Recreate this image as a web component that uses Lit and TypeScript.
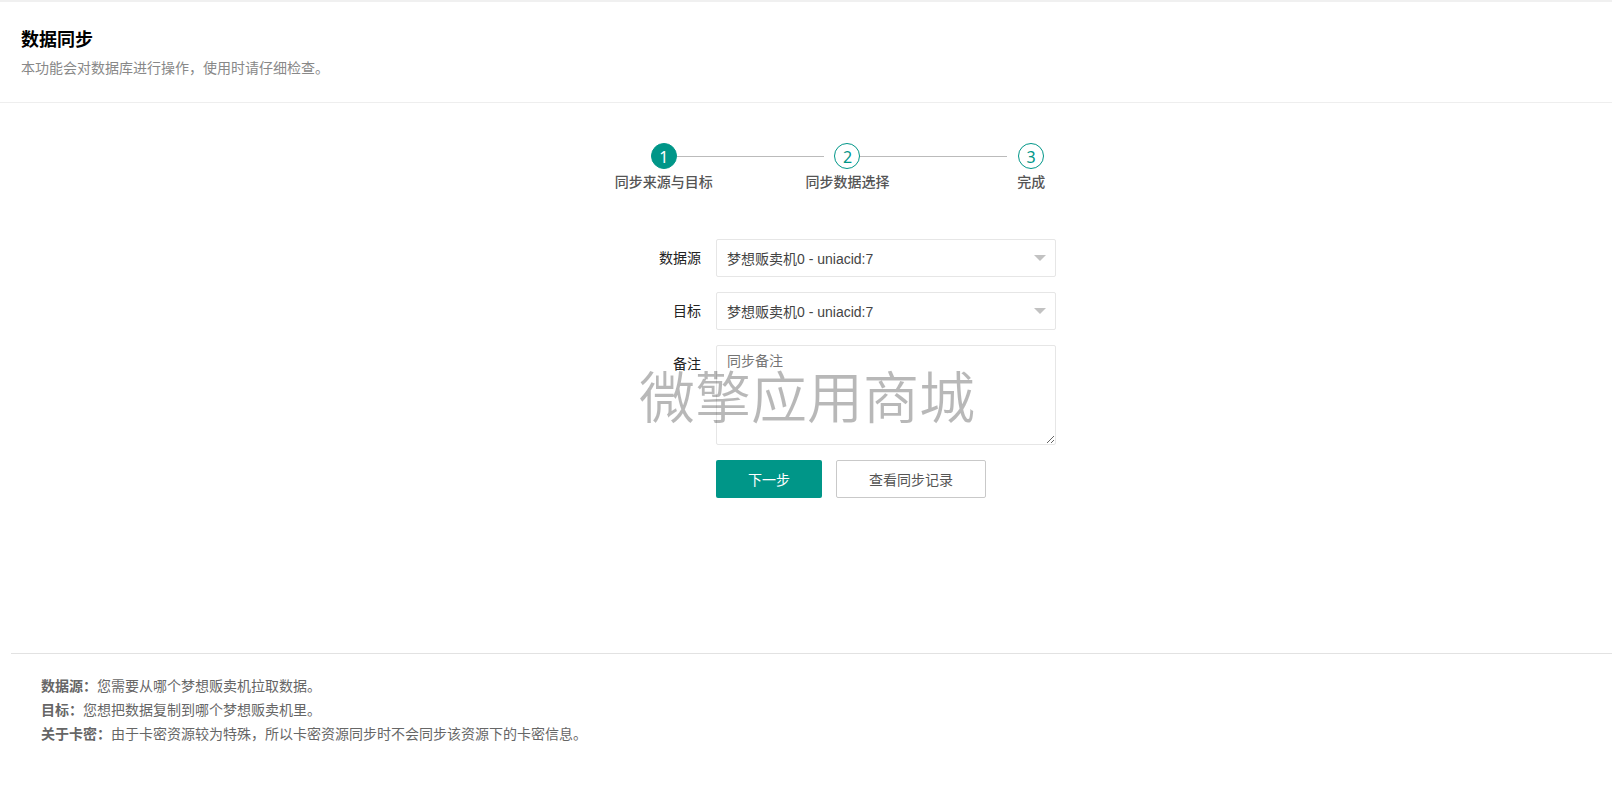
import { LitElement, html, css } from "lit";
import { customElement, state } from "lit/decorators.js";
import { classMap } from "lit/directives/class-map.js";

const STEPS = ["同步来源与目标", "同步数据选择", "完成"];
const MACHINES = [{ id: 7, name: "梦想贩卖机0 - uniacid:7" }];
const NOTES = [
  { term: "数据源：", text: "您需要从哪个梦想贩卖机拉取数据。" },
  { term: "目标：", text: "您想把数据复制到哪个梦想贩卖机里。" },
  {
    term: "关于卡密：",
    text: "由于卡密资源较为特殊，所以卡密资源同步时不会同步该资源下的卡密信息。",
  },
];

@customElement("app-root")
export class AppRoot extends LitElement {
  @state() current = 0;

  static styles = css`
    :host {
      display: block;
      color: #333;
      font: 14px/24px "Noto Sans CJK SC", sans-serif;
    }
    * {
      box-sizing: border-box;
    }
    .header {
      padding: 22px 21px 23px;
      border-top: 2px solid #f0f0f0;
      border-bottom: 1px solid #eee;
    }
    .title {
      margin: 0 0 3px;
      color: #000;
      font-size: 18px;
      font-weight: 700;
      line-height: 28px;
    }
    .subtitle {
      margin: 0;
      color: #888;
    }
    .main {
      position: relative;
      width: 500px;
      max-width: 100%;
      min-height: 550px;
      margin: 0 auto;
      padding-top: 40px;
    }
    .steps {
      display: grid;
      grid-template-columns: repeat(3, 1fr);
      margin: 0 -67px 0 16px;
      padding: 0;
      list-style: none;
    }
    .step {
      display: grid;
      grid-template-columns: 1fr 26px 1fr;
      align-items: center;
      text-align: center;
    }
    .number {
      grid-column: 2;
      height: 26px;
      border: 1px solid #009688;
      border-radius: 50%;
      color: #009688;
      font-family: "Noto Sans", sans-serif;
      font-size: 16px;
      line-height: 26px;
    }
    .active .number {
      background: #009688;
      color: #fff;
    }
    .line {
      grid-row: 1;
      grid-column: 3;
      height: 1px;
      margin-right: -68px;
      background: #bbb;
    }
    .step-name {
      grid-column: 1 / -1;
      color: #555;
      font-weight: 500;
    }
    .form {
      display: grid;
      grid-template-columns: 1fr 340px;
      gap: 15px;
      margin-top: 46px;
    }
    .label {
      padding-top: 6px;
      color: #222;
      text-align: right;
    }
    .select-box {
      position: relative;
    }
    .field {
      display: block;
      width: 100%;
      height: 38px;
      margin: 0;
      padding: 2px 10px 0;
      border: 1px solid #e6e6e6;
      border-radius: 2px;
      outline: none;
      background: #fff;
      color: #444;
      font: 14px/20px "Liberation Sans", "Noto Sans CJK SC", sans-serif;
      appearance: none;
    }
    .area {
      height: 100px;
      padding: 5px 10px;
      resize: vertical;
    }
    .area::placeholder {
      color: #757575;
    }
    .arrow {
      position: absolute;
      top: 16px;
      right: 10px;
      width: 12px;
      height: 6px;
      fill: #c2c2c2;
      pointer-events: none;
    }
    .actions {
      grid-column: 2;
      display: flex;
      gap: 14px;
    }
    .button {
      height: 38px;
      padding: 0 32px;
      border: 1px solid #c9c9c9;
      border-radius: 2px;
      background: #fff;
      color: #555;
      font: inherit;
      cursor: pointer;
    }
    .primary {
      border: none;
      background: #009688;
      color: #fff;
    }
    .watermark {
      position: absolute;
      top: 251px;
      left: 83px;
      color: rgba(0, 0, 0, 0.28);
      font-size: 56px;
      font-weight: 350;
      line-height: 80px;
      white-space: nowrap;
      pointer-events: none;
    }
    .notes {
      margin: 0 0 0 11px;
      padding: 19px 30px;
      border-top: 1px solid #e2e2e2;
      color: #666;
    }
    .note {
      margin: 0;
    }
  `;

  private next() {
    this.current = Math.min(this.current + 1, STEPS.length - 1);
  }

  private renderSelect(id: string, label: string) {
    return html`
      <label class="label" for=${id}>${label}</label>
      <div class="select-box">
        <select class="field" id=${id}>
          ${MACHINES.map((m) => html`<option value=${m.id}>${m.name}</option>`)}
        </select>
        <svg class="arrow" viewBox="0 0 12 6" aria-hidden="true">
          <path d="M0 0h12L6 6z" />
        </svg>
      </div>
    `;
  }

  render() {
    return html`
      <header class="header">
        <h1 class="title">数据同步</h1>
        <p class="subtitle">本功能会对数据库进行操作，使用时请仔细检查。</p>
      </header>
      <main class="main">
        <ol class="steps">
          ${STEPS.map(
            (name, i) => html`
              <li class="step ${classMap({ active: i === this.current })}">
                <span class="number">${i + 1}</span>
                ${i < STEPS.length - 1 ? html`<span class="line"></span>` : ""}
                <span class="step-name">${name}</span>
              </li>
            `
          )}
        </ol>
        <form class="form" @submit=${(e: Event) => e.preventDefault()}>
          ${this.renderSelect("source", "数据源")}
          ${this.renderSelect("target", "目标")}
          <label class="label" for="remark">备注</label>
          <textarea class="field area" id="remark" placeholder="同步备注"></textarea>
          <div class="actions">
            <button class="button primary" type="button" @click=${this.next}>下一步</button>
            <button class="button" type="button">查看同步记录</button>
          </div>
        </form>
        <div class="watermark">微擎应用商城</div>
      </main>
      <footer class="notes">
        ${NOTES.map(
          (n) => html`<p class="note"><strong>${n.term}</strong>${n.text}</p>`
        )}
      </footer>
    `;
  }
}
